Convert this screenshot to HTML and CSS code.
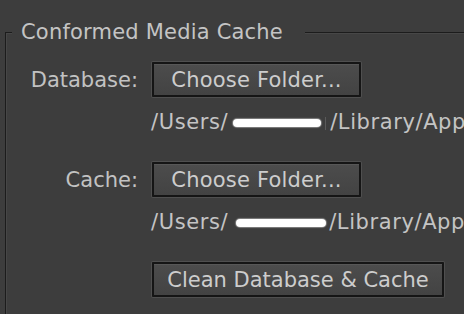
FILE: index.html
```html
<!DOCTYPE html>
<html>
<head>
<meta charset="utf-8">
<link rel="stylesheet" href="styles.css">
</head>
<body>
<fieldset class="group">
  <legend class="group-title">Conformed Media Cache</legend>
  <div class="rows">
    <span class="label">Database:</span>
    <button class="btn btn-folder">Choose Folder...</button>
    <div class="path path-db">/Users/<span class="redact redact-db"></span><span class="caret"></span>/Library/Application Support</div>

    <span class="label">Cache:</span>
    <button class="btn btn-folder">Choose Folder...</button>
    <div class="path path-cache">/Users/<span class="redact redact-cache"></span>/Library/Application Support</div>

    <button class="btn btn-clean">Clean Database &amp; Cache</button>
  </div>
</fieldset>
</body>
</html>
```

FILE: styles.css
```css
html, body {
  margin: 0;
  padding: 0;
  background: #3d3d3d;
  overflow: hidden;
  width: 464px;
  height: 314px;
}

body {
  font-family: "DejaVu Sans", Verdana, sans-serif;
  font-size: 21px;
  color: #c6c6c6;
}

.group {
  margin: 20px 0 0 5px;
  width: 700px;
  height: 400px;
  padding: 18px 0 0 0;
  border: 0;
  border-top: 1px solid #1c1c1c;
  border-left: 1px solid #1c1c1c;
  box-shadow: inset 1px 1px 0 #474747;
  box-sizing: content-box;
}

.group-title {
  margin-left: 6px;
  padding: 0 22px 0 9px;
  line-height: 24px;
  height: 24px;
  background: #3d3d3d;
  color: #c4c4c4;
  letter-spacing: 0.2px;
  white-space: nowrap;
}

.rows {
  display: grid;
  grid-template-columns: 131px 1fr;
  column-gap: 13px;
  row-gap: 13px;
  align-items: center;
  margin-left: 1px;
}

.label {
  grid-column: 1;
  justify-self: end;
  color: #c2c2c2;
  line-height: 24px;
  white-space: nowrap;
}

.btn {
  grid-column: 2;
  justify-self: start;
  height: 35px;
  box-sizing: border-box;
  padding: 0;
  font-family: inherit;
  font-size: 21px;
  line-height: 30px;
  color: #cdcdcd;
  text-align: center;
  white-space: nowrap;
  border: 2px solid #151515;
  border-radius: 1px;
  background: linear-gradient(#4c4c4c, #434343);
  box-shadow: 0 0 0 1px #4f4f4f, inset 0 1px 0 #575757;
  margin-left: 1px;
}

.btn-folder {
  width: 209px;
  letter-spacing: 0.2px;
}

.btn-clean {
  width: 292px;
}

.path {
  grid-column: 2;
  line-height: 24px;
  white-space: nowrap;
  color: #c4c4c4;
  letter-spacing: 0.6px;
  margin-bottom: 15px;
  display: flex;
  align-items: center;
}

.redact {
  display: inline-block;
  height: 8px;
  background: #ffffff;
  border-radius: 4px;
  box-shadow: 0 0 1px 1px rgba(255, 255, 255, 0.35);
  margin-top: 1px;
}

.redact-db {
  width: 88px;
  margin-left: 5px;
  margin-right: 4px;
}

.caret {
  display: inline-block;
  width: 1px;
  height: 13px;
  background: #5a5a5a;
  margin-right: 4px;
  margin-top: 2px;
}

.redact-cache {
  width: 90px;
  margin-left: 8px;
  margin-right: 3px;
}
```
